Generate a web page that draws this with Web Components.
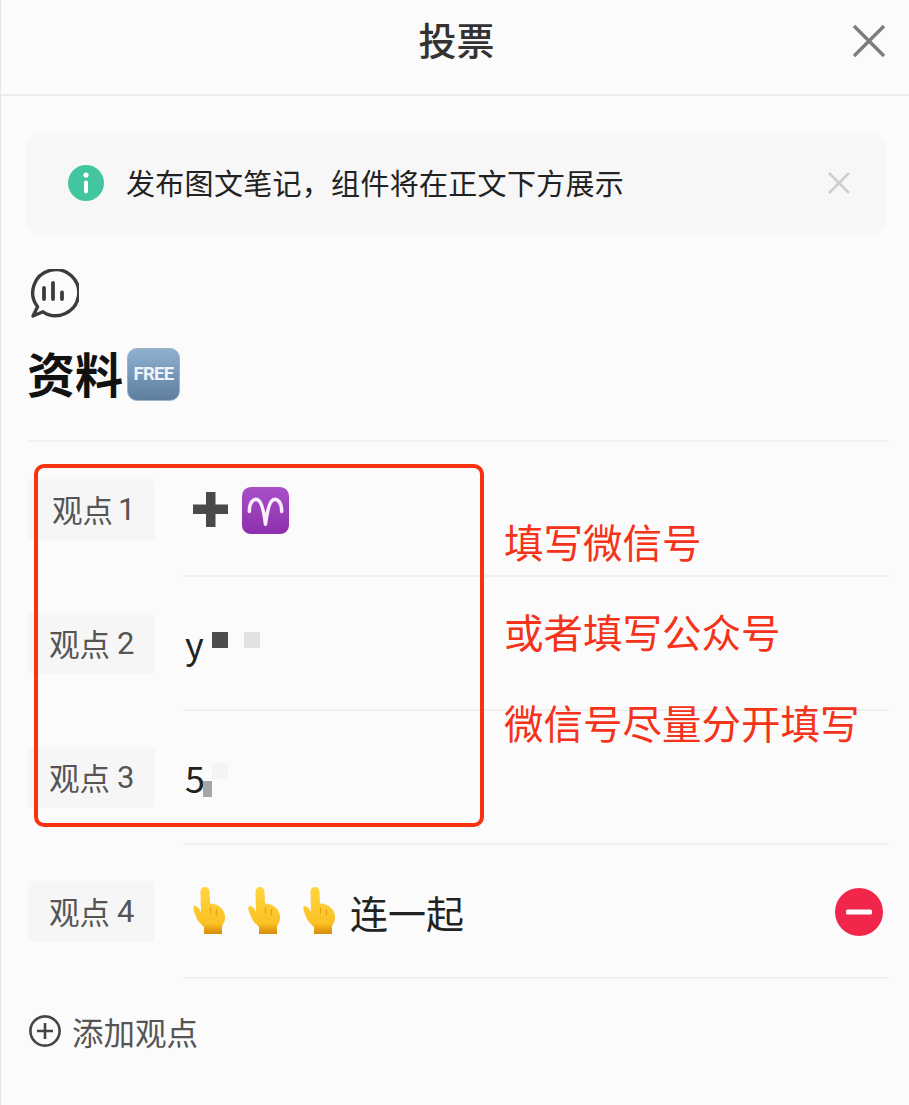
<!DOCTYPE html>
<html lang="zh">
<head>
<meta charset="utf-8">
<title>投票</title>
<style>
  html, body { margin: 0; background: #fbfbfb; }
  body { width: 909px; height: 1105px; overflow: hidden; font-family: "Noto Sans CJK SC", "Noto Sans", sans-serif; }
</style>
</head>
<body>
<vote-sheet>
  <vote-header slot="header">投票</vote-header>
  <notice-bar>发布图文笔记，组件将在正文下方展示</notice-bar>
  <vote-title>资料</vote-title>
  <vote-option label="观点" num="1" narrow>
    <span style="display:flex;align-items:center;gap:13px;margin-left:9px">
      <emoji-icon name="plus"></emoji-icon><emoji-icon name="aries"></emoji-icon>
    </span>
  </vote-option>
  <vote-option label="观点" num="2">
    <span style="display:flex;align-items:center;font-size:36px;color:#222;margin-left:2px">y<emoji-icon name="blur-y"></emoji-icon></span>
  </vote-option>
  <vote-option label="观点" num="3">
    <span style="display:flex;align-items:center;font-size:36px;color:#222;margin-left:2px">5<emoji-icon name="blur-5"></emoji-icon></span>
  </vote-option>
  <vote-option label="观点" num="4" removable>
    <span style="display:flex;align-items:center;margin-left:10px;font-size:38px;color:#222">
      <span style="display:flex;gap:23px"><emoji-icon name="hand"></emoji-icon><emoji-icon name="hand"></emoji-icon><emoji-icon name="hand"></emoji-icon></span>
      <span style="margin-left:15px">连一起</span>
    </span>
  </vote-option>
  <add-option>添加观点</add-option>
  <red-callouts></red-callouts>
</vote-sheet>

<script>
  function def(name, css, html) {
    customElements.define(name, class extends HTMLElement {
      constructor() {
        super();
        const root = this.attachShadow({ mode: 'open' });
        root.innerHTML = '<style>' + css + '</style>' + (typeof html === 'function' ? html(this) : html);
      }
    });
  }

  const font = '"Noto Sans CJK SC", "Noto Sans", sans-serif';

  def('vote-sheet', `
    :host { display: block; position: relative; height: 1105px; box-sizing: border-box; border-left: 1px solid #e6e6e6; }
  `, '<slot name="header"></slot><slot></slot>');

  def('vote-header', `
    :host { display: flex; align-items: center; justify-content: center; position: relative; height: 76px; padding: 0 0 18px 3px;
      border-bottom: 2px solid #ececec; font: 500 38px ${font}; color: #333; }
    svg { position: absolute; right: 23px; top: 24px; }
  `, `<slot></slot>
    <svg width="34" height="34" viewBox="0 0 34 34" fill="none" stroke="#7d7d7d" stroke-width="3.4"><path d="M2 2 32 32M32 2 2 32"/></svg>`);

  def('notice-bar', `
    :host { display: flex; align-items: center; height: 104px; margin: 36px 22px 0 25px; padding: 0 36px 2px 42px; box-sizing: border-box;
      background: #f7f7f7; border-radius: 18px; font: 400 29px ${font}; color: #222; }
    .t { flex: 1; margin: 0 0 2px 22px; letter-spacing: .3px; }
  `, `<svg width="36" height="36" viewBox="0 0 36 36"><circle cx="18" cy="18" r="18" fill="#43c69f"/><circle cx="18" cy="10" r="2.6" fill="#fff"/><rect x="16" y="15.5" width="4" height="13" rx="2" fill="#fff"/></svg>
    <span class="t"><slot></slot></span>
    <svg width="24" height="24" viewBox="0 0 24 24" fill="none" stroke="#cfcfcf" stroke-width="2.6"><path d="M2 2 22 22M22 2 2 22"/></svg>`);

  def('vote-title', `
    :host { display: block; margin: 33px 20px 0 26px; height: 173px; box-sizing: border-box; border-bottom: 2px solid #f0f0f0; }
    .ic { display: block; margin-left: 2px; }
    .h { display: flex; align-items: center; height: 56px; margin-top: 27px; font: 700 48px/56px ${font}; color: #111; }
    .txt { padding-bottom: 4px; }
    .free { display: flex; align-items: center; justify-content: center; width: 53px; height: 53px; margin-left: 4px; box-sizing: border-box;
      border-radius: 10px; border: 1.5px solid #9cb2c8; background: linear-gradient(#8fb0d0, #5f7e9f);
      font: 700 18.5px "Roboto", sans-serif; letter-spacing: -.7px; color: #eef3f8; }
  `, `<svg class="ic" width="50" height="50" viewBox="0 0 50 50" fill="none" stroke="#3c3c3c" stroke-width="3.4" stroke-linecap="round" stroke-linejoin="round">
      <path d="M4 47 L8.600 37.800 A23 23 0 1 1 14 42.800 Z"/><path stroke-width="3.800" d="M15 19v11M24 14v16M33 23.500v6.500"/></svg>
    <div class="h"><span class="txt"><slot></slot></span><span class="free">FREE</span></div>`);

  def('vote-option', `
    :host { display: flex; height: 134px; align-items: center; }
    .chip { display: flex; align-items: center; gap: 7px; width: 127px; height: 61px; margin-left: 27px; padding-left: 21px; box-sizing: border-box; flex: none;
      background: #f6f6f6; border-radius: 4px; font: 400 30.5px ${font}; color: #555; }
    :host([narrow]) .chip { padding-left: 24px; gap: 5px; }
    .val { flex: 1; align-self: stretch; display: flex; align-items: center; margin: 0 20px -1px 28px; border-bottom: 2px solid #f0f0f0; position: relative; box-sizing: border-box; padding-top: 1px; }
    .num { font-family: "Roboto", sans-serif; font-size: 31px; }
    .rm { position: absolute; right: 6px; top: 44px; }
  `, el => `<div class="chip"><span>${el.getAttribute('label')}</span><span class="num">${el.getAttribute('num')}</span></div>
    <div class="val"><slot></slot>${el.hasAttribute('removable') ? `<svg class="rm" width="48" height="48" viewBox="0 0 48 48"><circle cx="24" cy="24" r="24" fill="#f0264a"/><rect x="11" y="21.500" width="26" height="5" rx="1.500" fill="#fff"/></svg>` : ''}</div>`);

  def('add-option', `
    :host { display: flex; align-items: center; gap: 10px; margin: 30px 0 0 27px; height: 46px; font: 400 31.5px ${font}; color: #555; }
  `, `<svg width="34" height="34" viewBox="0 0 34 34" fill="none" stroke="#444" stroke-width="2.6"><circle cx="17" cy="17" r="14.600"/><path d="M17 9v16M9 17h16"/></svg><slot></slot>`);

  const hand = `<svg width="32" height="48" viewBox="0 0 32 48" style="display:block"><defs><linearGradient id="h" x1="0" y1="0" x2="0" y2="1"><stop offset="0" stop-color="#ffd53f"/><stop offset=".78" stop-color="#fbc125"/><stop offset=".9" stop-color="#e5a012"/><stop offset="1" stop-color="#d98e0c"/></linearGradient></defs>
      <path fill="url(#h)" d="M7.500 4.500a4.500 4.500 0 0 1 9 0L17 16.500C21 16.500 25 18 28 21C31 23.500 32 27 32 31C32 35 30 37 29 39L29 47L11 47L11 40C7 36.500 4 33 2.500 28.500C1 25 0 22 .5 20C1.500 18 4 19.500 6 21.500L8 25Z"/>
      <path d="M17.500 21v5M23.500 23v5" stroke="#e6a314" stroke-width="1.300" stroke-linecap="round" fill="none"/></svg>`;

  const icons = {
    plus: `<svg width="37" height="37" viewBox="0 0 37 37" style="display:block"><path fill="#4a4a4a" d="M14 1h9.500v12.500H36v9.500H23.500v13H14V23H1V13.500h13z"/></svg>`,
    aries: `<svg width="47" height="47" viewBox="0 0 48 48" style="display:block;margin-top:3px"><defs><linearGradient id="a" x1="0" y1="0" x2="0" y2="1"><stop offset="0" stop-color="#a950c9"/><stop offset="1" stop-color="#8c2fac"/></linearGradient></defs>
      <rect width="48" height="48" rx="9" fill="url(#a)"/><path d="M7.500 25C7.500 15 12 11.500 16 13C20.500 15 23 30 24 38C25 30 27.500 15 32 13C36 11.500 40.500 15 40.500 25" fill="none" stroke="#fbeefc" stroke-width="3.600" stroke-linecap="round" stroke-linejoin="round"/></svg>`,
    hand,
    'blur-y': `<span style="display:flex;margin-left:8px;margin-top:-6px"><i style="width:16px;height:16px;background:#4d4d4d;display:block"></i><i style="width:16px;height:16px;background:#e2e2e2;display:block;margin-left:16px"></i></span>`,
    'blur-5': `<span style="position:relative;display:block;width:9px;height:16px;background:#a6a6a6;margin-left:-2px;margin-top:24px"><i style="position:absolute;left:9px;top:-18px;width:16px;height:16px;background:#f4f4f4"></i></span>`
  };

  customElements.define('emoji-icon', class extends HTMLElement {
    constructor() {
      super();
      this.attachShadow({ mode: 'open' });
    }
    connectedCallback() {
      this.shadowRoot.innerHTML = '<style>:host{display:inline-flex;align-items:center}</style>' + (icons[this.getAttribute('name')] || '');
    }
  });

  def('red-callouts', `
    :host { position: absolute; inset: 0; pointer-events: none; font: 400 39.5px/50px ${font}; color: #f5321a; }
    .box { position: absolute; left: 33px; top: 464px; width: 450px; height: 363px; box-sizing: border-box; border: 4px solid #f8330f; border-radius: 10px; }
    .n { position: absolute; left: 503px; white-space: nowrap; }
  `, `<div class="box"></div>
    <div class="n" style="top:516px">填写微信号</div>
    <div class="n" style="top:606px">或者填写公众号</div>
    <div class="n" style="top:697px">微信号尽量分开填写</div>`);
</script>
</body>
</html>
